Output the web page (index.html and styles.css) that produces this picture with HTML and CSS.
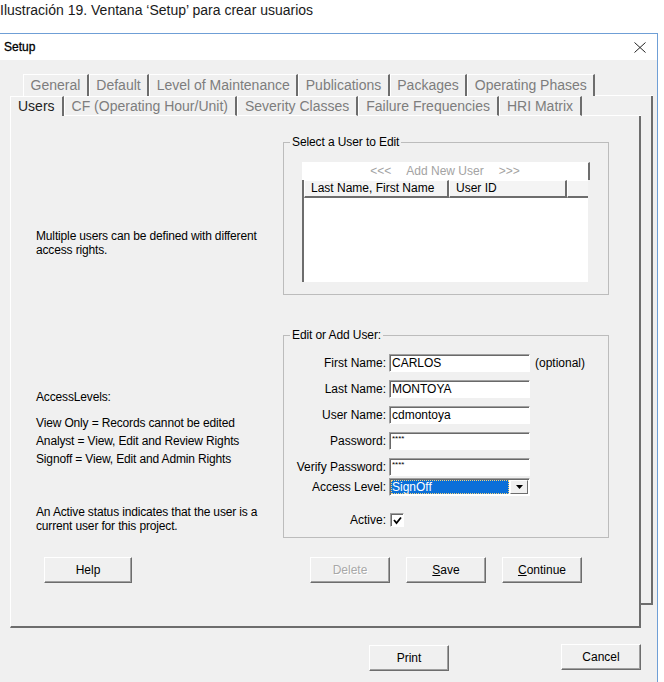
FILE: index.html
```html
<!DOCTYPE html>
<html lang="es">
<head>
  <meta charset="UTF-8" />
  <meta name="viewport" content="width=device-width, initial-scale=1.0" />
  <title>Setup</title>
  <link rel="stylesheet" href="styles.css">
</head>
<body>
  <p class="caption">Ilustración 19. Ventana ‘Setup’ para crear usuarios</p>

  <div class="window">
    <div class="titlebar">
      <span class="title">Setup</span>
      <svg class="close" width="12" height="11" viewBox="0 0 12 11">
        <path d="M0.5 0.5L11.5 10.5M11.5 0.5L0.5 10.5" stroke="#222" stroke-width="1" fill="none" />
      </svg>
    </div>

    <div class="client">
      <div class="tabctl">
        <div class="tabrow back">
          <span class="tab">General</span>
          <span class="tab">Default</span>
          <span class="tab">Level of Maintenance</span>
          <span class="tab">Publications</span>
          <span class="tab">Packages</span>
          <span class="tab">Operating Phases</span>
          <span class="tab-fill"></span>
        </div>

        <div class="tabbody">
          <div class="front">
            <div class="tabrow front-tabs">
              <span class="tab active">Users</span>
              <span class="tab">CF (Operating Hour/Unit)</span>
              <span class="tab">Severity Classes</span>
              <span class="tab">Failure Frequencies</span>
              <span class="tab">HRI Matrix</span>
              <span class="tab-fill"></span>
            </div>

            <div class="panel">
              <div class="notes">
                <p class="intro">Multiple users can be defined with different access rights.</p>
                <p class="levels-title">AccessLevels:</p>
                <p class="levels">View Only = Records cannot be edited<br>Analyst = View, Edit and Review Rights<br>Signoff = View, Edit and Admin Rights</p>
                <p class="active-note">An Active status indicates that the user is a current user for this project.</p>
              </div>

              <fieldset class="group users">
                <legend>Select a User to Edit</legend>
                <div class="group-body">
                  <button class="add-user" type="button">
                    <span>&lt;&lt;&lt;</span><span>Add New User</span><span>&gt;&gt;&gt;</span>
                  </button>
                  <div class="user-list">
                    <div class="list-head">
                      <span class="col-name">Last Name, First Name</span>
                      <span class="col-id">User ID</span>
                      <span class="col-rest"></span>
                    </div>
                  </div>
                </div>
              </fieldset>

              <fieldset class="group edit">
                <legend>Edit or Add User:</legend>
                <div class="group-body">
                  <div class="field">
                    <label for="firstName">First Name:</label>
                    <input class="textbox" id="firstName" type="text" value="CARLOS" />
                    <span class="hint">(optional)</span>
                  </div>
                  <div class="field">
                    <label for="lastName">Last Name:</label>
                    <input class="textbox" id="lastName" type="text" value="MONTOYA" />
                  </div>
                  <div class="field">
                    <label for="userName">User Name:</label>
                    <input class="textbox" id="userName" type="text" value="cdmontoya" />
                  </div>
                  <div class="field">
                    <label for="password">Password:</label>
                    <input class="textbox secret" id="password" type="text" value="****" />
                  </div>
                  <div class="field">
                    <label for="verify">Verify Password:</label>
                    <input class="textbox secret" id="verify" type="text" value="****" />
                  </div>
                  <div class="field level">
                    <label>Access Level:</label>
                    <div class="combo">
                      <span class="combo-value">SignOff</span>
                      <span class="combo-btn">
                        <svg width="7" height="4" viewBox="0 0 7 4"><polygon points="0,0 7,0 3.5,4" fill="#000" /></svg>
                      </span>
                    </div>
                  </div>
                  <div class="field active">
                    <label>Active:</label>
                    <span class="check">
                      <svg width="9" height="9" viewBox="0 0 9 9"><polyline points="1,4 3.5,7 8,1.5" fill="none" stroke="#000" stroke-width="1.8" /></svg>
                    </span>
                  </div>
                </div>
              </fieldset>

              <div class="panel-buttons">
                <button class="btn help" type="button">Help</button>
                <div class="actions">
                  <button class="btn" type="button" disabled>Delete</button>
                  <button class="btn" type="button"><u>S</u>ave</button>
                  <button class="btn" type="button"><u>C</u>ontinue</button>
                </div>
              </div>
            </div>
          </div>
          <div class="back-edge"></div>
        </div>
      </div>

      <div class="footer">
        <button class="btn" type="button">Print</button>
        <button class="btn cancel" type="button">Cancel</button>
      </div>
    </div>
  </div>
</body>
</html>
```

FILE: styles.css
```css
body {
  margin: 0;
  width: 664px;
  height: 682px;
  overflow: hidden;
  background: #fff;
  font-family: "Liberation Sans", Arial, sans-serif;
  font-size: 12px;
  color: #000;
}
.caption {
  margin: 2px 0 0;
  font-size: 14px;
  line-height: 16px;
  color: #1a1a1a;
}

/* window frame */
.window {
  margin-top: 15px;
  width: 657px;
  border-top: 1px solid #6f9fd6;
  border-right: 1px solid #6f9fd6;
}
.titlebar {
  display: flex;
  align-items: center;
  justify-content: space-between;
  height: 26px;
  padding: 0 11px 0 4px;
  background: #fff;
}
.title {
  color: #000;
  -webkit-text-stroke: 0.3px #000;
}
.client {
  box-sizing: border-box;
  height: 622px;
  padding-top: 14px;
  background: #f0f0f0;
}

/* tab strip, two rows */
.tabctl {
  width: 643px;
  margin-left: 10px;
}
.tabrow {
  display: flex;
}
.tabrow.back {
  height: 22px;
  padding-left: 13px;
}
.tabrow.front-tabs {
  height: 20px;
}
.tab {
  padding: 0 7px;
  border-top: 1px solid #fff;
  border-left: 1px solid #fff;
  border-right: 2px solid #6d6d6d;
  font-size: 14px;
  line-height: 21px;
  color: #7d7d7d;
  white-space: nowrap;
}
.back .tab {
  padding: 0 6.5px;
}
.front-tabs .tab {
  line-height: 18px;
  border-bottom: 1px solid #fff;
}
.front-tabs .tab.active {
  border-bottom: none;
  line-height: 19px;
  color: #1e1e1e;
}
.tab-fill {
  flex: 1;
  border-bottom: 1px solid #fff;
}
.tabbody {
  display: flex;
}
.front {
  width: 631px;
}
.back-edge {
  flex: 1;
  margin-bottom: 23px;
  border-right: 2px solid #6d6d6d;
  border-bottom: 2px solid #6d6d6d;
}
.panel {
  box-sizing: border-box;
  height: 512px;
  padding: 19px 0 0 25px;
  border-left: 1px solid #fff;
  border-right: 2px solid #6d6d6d;
  border-bottom: 2px solid #6d6d6d;
  display: grid;
  grid-template-columns: 247px 326px;
  align-content: start;
}

/* help text on the left */
.notes {
  grid-row: 1 / 3;
  width: 235px;
  letter-spacing: -0.15px;
}
.notes p {
  margin: 0;
  line-height: 14px;
}
.notes .intro {
  margin-top: 94px;
}
.notes .levels-title {
  margin-top: 133px;
}
.notes .levels {
  margin-top: 10px;
  line-height: 18px;
}
.notes .active-note {
  margin-top: 37px;
}

/* group boxes */
.group {
  margin: 0;
  padding: 0;
  min-width: 0;
  border: 1px solid #bcbcbc;
  grid-column: 2;
}
.group legend {
  margin-left: 6px;
  padding: 0 2px;
  line-height: 14px;
  letter-spacing: -0.1px;
}
.users .group-body {
  padding: 13px 18px 12px;
}
.edit {
  margin-top: 33px;
}
.edit .group-body {
  padding: 12px 0 10px;
}

.add-user {
  display: flex;
  justify-content: center;
  gap: 15px;
  box-sizing: border-box;
  width: 288px;
  height: 18px;
  padding: 0;
  background: #fff;
  border: none;
  border-top: 1px solid #fff;
  border-right: 2px solid #6d6d6d;
  font: 12px "Liberation Sans", Arial, sans-serif;
  line-height: 16px;
  color: #a3a3a3;
}
.user-list {
  box-sizing: border-box;
  width: 286px;
  height: 102px;
  background: #fff;
  border-left: 2px solid #6d6d6d;
}
.list-head {
  display: flex;
  height: 18px;
}
.list-head span {
  box-sizing: border-box;
  padding-left: 6px;
  line-height: 15px;
  background: #f4f4f4;
  border-top: 1px solid #fff;
  border-left: 1px solid #fff;
  border-right: 2px solid #6d6d6d;
  border-bottom: 2px solid #6d6d6d;
}
.list-head .col-name {
  width: 145px;
}
.list-head .col-id {
  width: 118px;
}
.list-head .col-rest {
  flex: 1;
  border-right: none;
}

/* edit form rows */
.field {
  display: flex;
  align-items: center;
  height: 18px;
  margin-top: 8px;
}
.field:first-child {
  margin-top: 0;
}
.field label {
  width: 102px;
  margin-right: 3px;
  text-align: right;
}
.field.level {
  margin-top: 2px;
}
.field.active {
  height: 14px;
  margin-top: 17px;
}
.textbox {
  box-sizing: border-box;
  width: 141px;
  height: 18px;
  margin: 0;
  padding: 0 0 0 2px;
  border: 1px solid;
  border-color: #a0a0a0 #fff #fff #a0a0a0;
  box-shadow: inset 1px 1px #696969;
  background: #fff;
  font: 12px "Liberation Sans", Arial, sans-serif;
  color: #000;
  outline: none;
}
.textbox.secret {
  font-size: 8px;
  padding-bottom: 6px;
}
.hint {
  margin-left: 5px;
}
.combo {
  box-sizing: border-box;
  display: flex;
  width: 141px;
  height: 18px;
  padding: 1px;
  border: 1px solid;
  border-color: #a0a0a0 #fff #fff #a0a0a0;
  box-shadow: inset 1px 1px #696969;
  background: #fff;
}
.combo-value {
  flex: 1;
  padding-left: 1px;
  line-height: 14px;
  background: #0a6fd8;
  color: #fff;
  outline: 1px dotted #f3d27a;
  outline-offset: -1px;
}
.combo-btn {
  box-sizing: border-box;
  display: flex;
  align-items: center;
  justify-content: center;
  width: 18px;
  margin-left: 1px;
  background: #f0f0f0;
  border: 1px solid;
  border-color: #fff #6d6d6d #6d6d6d #fff;
}
.check {
  box-sizing: border-box;
  display: flex;
  align-items: center;
  justify-content: center;
  width: 14px;
  height: 14px;
  margin-left: 1px;
  border: 1px solid;
  border-color: #a0a0a0 #fff #fff #a0a0a0;
  box-shadow: inset 1px 1px #696969;
  background: #fff;
}

/* push buttons */
.btn {
  box-sizing: border-box;
  width: 80px;
  height: 26px;
  padding: 0;
  background: #f0f0f0;
  border: 1px solid;
  border-color: #fff #6d6d6d #6d6d6d #fff;
  box-shadow: inset -1px -1px #a0a0a0;
  font: 12px "Liberation Sans", Arial, sans-serif;
  color: #000;
}
.btn:disabled {
  color: #a8a8a8;
  text-shadow: 1px 1px #fff;
}
.panel-buttons {
  grid-column: 1 / -1;
  display: flex;
  margin-top: 19px;
}
.panel-buttons .help {
  width: 88px;
  margin-left: 8px;
}
.actions {
  display: flex;
  gap: 16px;
  margin-left: auto;
  margin-right: 27px;
}
.footer {
  display: flex;
  justify-content: flex-end;
  align-items: flex-start;
  gap: 112px;
  width: 641px;
  margin-top: 16px;
}
.footer .btn {
  margin-top: 1px;
}
.footer .cancel {
  margin-top: 0;
}
```
